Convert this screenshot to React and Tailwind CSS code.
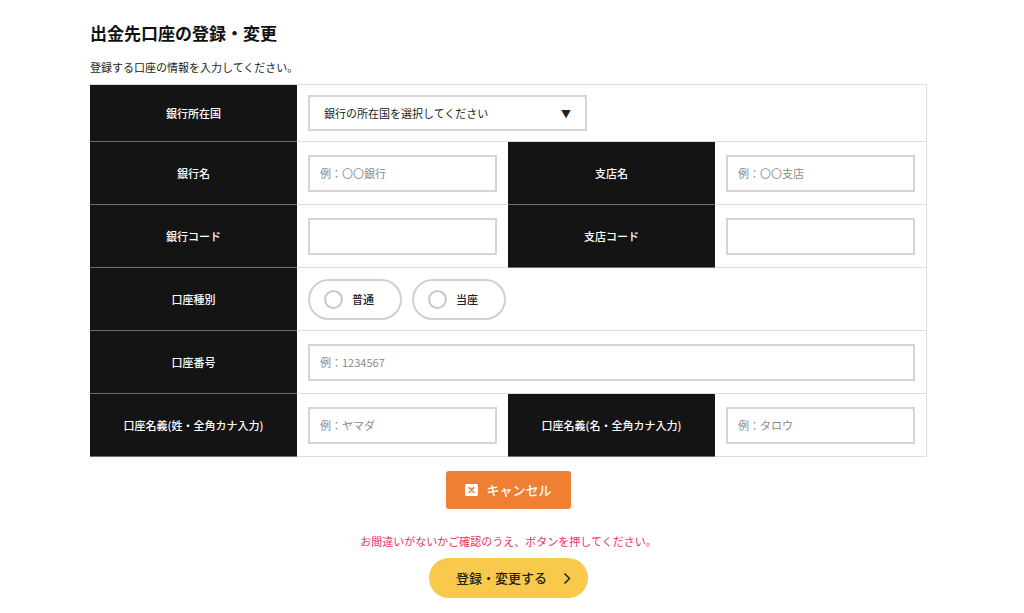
import React from 'react';

const font = { fontFamily: '"Noto Sans CJK JP", "Noto Sans", sans-serif' };

const Label = ({ children, className = '' }) => (
  <div className={`w-[207px] shrink-0 bg-[#141414] text-white text-[11px] font-medium flex items-center justify-center border-b border-[#6f6f6f] ${className}`}>
    {children}
  </div>
);

const Cell = ({ children, className = '' }) => (
  <div className={`flex items-center px-[11px] border-b border-[#dddddd] bg-white ${className}`}>
    {children}
  </div>
);

const TextInput = ({ placeholder = '', className = 'w-[189px]' }) => (
  <div className={`h-[37px] border-2 border-[#d4d4d4] bg-white flex items-center px-[10px] text-[11px] text-[#8a8a8a] ${className}`}>
    {placeholder}
  </div>
);

const Radio = ({ label }) => (
  <div className="w-[94px] h-[41px] rounded-full border-2 border-[#d0d0d0] flex items-center pl-[14px] gap-[9px]">
    <span className="w-[19px] h-[19px] rounded-full border-2 border-[#c8c8c8] bg-white" />
    <span className="text-[11px] font-medium text-[#222]">{label}</span>
  </div>
);

const App = () => {
  return (
    <div className="w-[1024px] h-[613px] bg-white overflow-hidden" style={font}>
      <div className="pl-[90px] pt-[22px] w-[927px]">
        <h1 className="text-[17px] font-bold text-[#111] leading-[22px]">出金先口座の登録・変更</h1>
        <p className="mt-[15px] text-[11px] text-[#222] leading-[16px]">登録する口座の情報を入力してください。</p>

        <div className="mt-[9px] w-[837px] border-t border-r border-[#dddddd]">
          <div className="flex h-[57px]">
            <Label>銀行所在国</Label>
            <Cell className="flex-1">
              <div className="w-[279px] h-[36px] border-2 border-[#d4d4d4] flex items-center justify-between pl-[14px] pr-[14px] text-[11px] text-[#222]">
                <span>銀行の所在国を選択してください</span>
                <span className="text-[10px]">▼</span>
              </div>
            </Cell>
          </div>

          <div className="flex h-[63px]">
            <Label>銀行名</Label>
            <Cell className="w-[212px]"><TextInput placeholder="例：〇〇銀行" /></Cell>
            <Label>支店名</Label>
            <Cell className="flex-1"><TextInput placeholder="例：〇〇支店" /></Cell>
          </div>

          <div className="flex h-[63px]">
            <Label>銀行コード</Label>
            <Cell className="w-[212px]"><TextInput /></Cell>
            <Label>支店コード</Label>
            <Cell className="flex-1"><TextInput /></Cell>
          </div>

          <div className="flex h-[63px]">
            <Label>口座種別</Label>
            <Cell className="flex-1 gap-[10px]">
              <Radio label="普通" />
              <Radio label="当座" />
            </Cell>
          </div>

          <div className="flex h-[63px]">
            <Label>口座番号</Label>
            <Cell className="flex-1"><TextInput placeholder="例：1234567" className="w-full" /></Cell>
          </div>

          <div className="flex h-[63px]">
            <Label>口座名義(姓・全角カナ入力)</Label>
            <Cell className="w-[212px]"><TextInput placeholder="例：ヤマダ" /></Cell>
            <Label>口座名義(名・全角カナ入力)</Label>
            <Cell className="flex-1"><TextInput placeholder="例：タロウ" /></Cell>
          </div>
        </div>

        <div className="w-[837px] flex flex-col items-center">
          <button className="mt-[14px] w-[125px] h-[38px] rounded-[3px] bg-[#ef7f33] text-white text-[13px] font-medium flex items-center justify-center gap-[8px]">
            <svg width="13" height="12" viewBox="0 0 13 12">
              <rect x="0" y="0" width="13" height="12" rx="1.5" fill="#fff" />
              <path d="M4.3 3.8 L8.7 8.2 M8.7 3.8 L4.3 8.2" stroke="#ef7f33" strokeWidth="1.8" strokeLinecap="round" />
            </svg>
            <span>キャンセル</span>
          </button>

          <p className="mt-[24px] text-[11px] text-[#e8336a] leading-[16px]">お間違いがないかご確認のうえ、ボタンを押してください。</p>

          <button className="mt-[9px] w-[159px] h-[40px] rounded-full bg-[#f8c94b] text-[#222] text-[13px] font-medium flex items-center justify-center gap-[16px] pl-[10px]">
            <span>登録・変更する</span>
            <svg width="8" height="13" viewBox="0 0 8 13">
              <path d="M1.5 1.5 L6.5 6.5 L1.5 11.5" fill="none" stroke="#222" strokeWidth="1.5" />
            </svg>
          </button>
        </div>
      </div>
    </div>
  );
};

export default App;
